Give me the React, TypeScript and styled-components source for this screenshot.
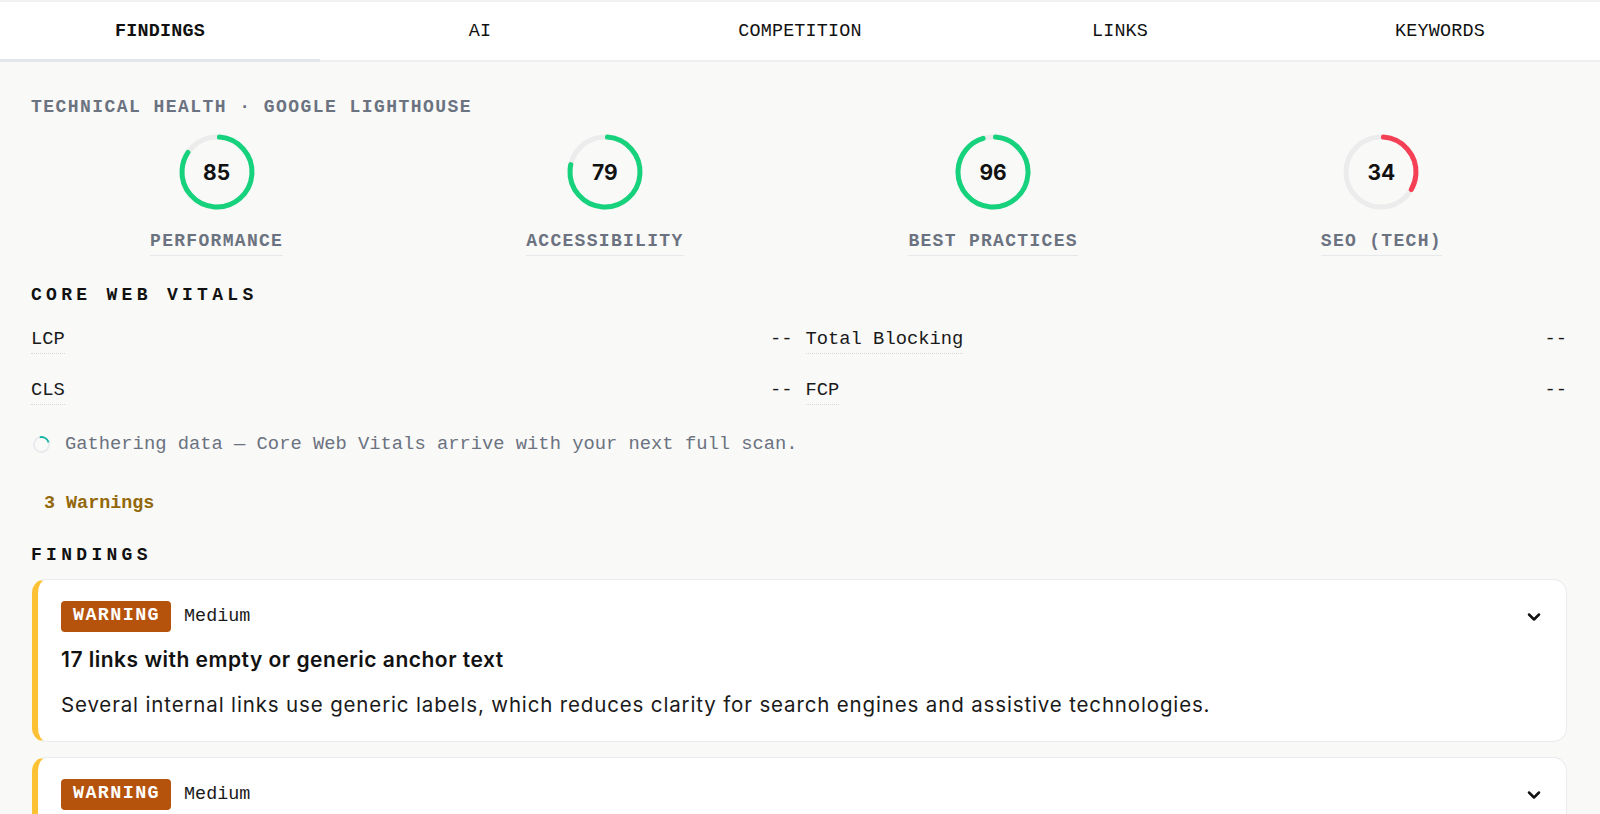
import styled, { createGlobalStyle } from "styled-components"
import { ChevronDown } from "lucide-react"

const mono = `"Liberation Mono", "DejaVu Sans Mono", monospace`
const sans = `Inter, "Noto Sans", sans-serif`

const GlobalStyle = createGlobalStyle`
  * { box-sizing: border-box; }
  body {
    margin: 0;
    background: #f9f9f8;
    font-family: ${mono};
    color: #111;
  }
`

const tabs = ["FINDINGS", "AI", "COMPETITION", "LINKS", "KEYWORDS"]

const scores = [
  { value: 85, label: "PERFORMANCE", color: "#17d27c" },
  { value: 79, label: "ACCESSIBILITY", color: "#17d27c" },
  { value: 96, label: "BEST PRACTICES", color: "#17d27c" },
  { value: 34, label: "SEO (TECH)", color: "#f43f55" },
]

const vitals = [
  { label: "LCP", value: "--" },
  { label: "Total Blocking", value: "--" },
  { label: "CLS", value: "--" },
  { label: "FCP", value: "--" },
]

const findings = [
  {
    title: "17 links with empty or generic anchor text",
    text: "Several internal links use generic labels, which reduces clarity for search engines and assistive technologies.",
  },
  {
    title: "Missing alt text on images",
    text: "Some images have no alt attribute.",
  },
]

const Gauge = ({ value, color }: { value: number; color: string }) => {
  const r = 35
  const c = 2 * Math.PI * r
  return (
    <GaugeWrap>
      <svg width="78" height="78" viewBox="0 0 78 78">
        <circle cx="39" cy="39" r={r} fill="none" stroke="#ececec" strokeWidth="5" />
        <circle
          cx="39"
          cy="39"
          r={r}
          fill="none"
          stroke={color}
          strokeWidth="5"
          strokeLinecap="round"
          strokeDasharray={`${(c * value) / 100 - 4} ${c}`}
          transform="rotate(-86 39 39)"
        />
      </svg>
      <GaugeValue>{value}</GaugeValue>
    </GaugeWrap>
  )
}

export default function App() {
  return (
    <>
      <GlobalStyle />
      <TabBar>
        {tabs.map((t, i) => (
          <Tab key={t} $active={i === 0}>
            {t}
          </Tab>
        ))}
      </TabBar>
      <Page>
        <SectionLabel>TECHNICAL HEALTH · GOOGLE LIGHTHOUSE</SectionLabel>
        <ScoreGrid>
          {scores.map((s) => (
            <ScoreItem key={s.label}>
              <Gauge value={s.value} color={s.color} />
              <ScoreLabel>{s.label}</ScoreLabel>
            </ScoreItem>
          ))}
        </ScoreGrid>
        <Heading>CORE WEB VITALS</Heading>
        <VitalsGrid>
          {vitals.map((v) => (
            <VitalRow key={v.label}>
              <VitalLabel>{v.label}</VitalLabel>
              <span>{v.value}</span>
            </VitalRow>
          ))}
        </VitalsGrid>
        <Gathering>
          <Spinner />
          Gathering data — Core Web Vitals arrive with your next full scan.
        </Gathering>
        <WarningCount>3 Warnings</WarningCount>
        <Heading $top={29}>FINDINGS</Heading>
        <CardList>
          {findings.map((f) => (
            <Card key={f.title}>
              <CardHead>
                <Badge>WARNING</Badge>
                <Severity>Medium</Severity>
                <Chevron>
                  <ChevronDown size={20} strokeWidth={3} />
                </Chevron>
              </CardHead>
              <CardTitle>{f.title}</CardTitle>
              <CardText>{f.text}</CardText>
            </Card>
          ))}
        </CardList>
      </Page>
    </>
  )
}

const TabBar = styled.nav`
  display: grid;
  grid-template-columns: repeat(5, 1fr);
  background: #fff;
  border-top: 2px solid #f1f3f3;
  border-bottom: 2px solid #eef0f0;
  height: 62px;
`

const Tab = styled.div<{ $active?: boolean }>`
  display: flex;
  align-items: center;
  justify-content: center;
  font-size: 18.4px;
  letter-spacing: 0.2px;
  font-weight: ${(p) => (p.$active ? 700 : 400)};
  color: #111;
  border-bottom: 3px solid ${(p) => (p.$active ? "#e4e7ea" : "transparent")};
  margin-bottom: -2px;
  padding-top: 1px;
`

const Page = styled.main`
  padding: 34px 33px 0 31px;
`

const SectionLabel = styled.div`
  font-size: 18px;
  letter-spacing: 1.45px;
  font-weight: 700;
  color: #6b7280;
  line-height: 22px;
`

const ScoreGrid = styled.div`
  display: grid;
  grid-template-columns: repeat(4, 1fr);
  gap: 17px;
  margin-top: 15px;
`

const ScoreItem = styled.div`
  display: flex;
  flex-direction: column;
  align-items: center;
`

const GaugeWrap = styled.div`
  position: relative;
  width: 78px;
  height: 78px;
  svg {
    display: block;
  }
`

const GaugeValue = styled.span`
  position: absolute;
  inset: 0;
  display: flex;
  align-items: center;
  justify-content: center;
  font-family: ${sans};
  font-weight: 700;
  font-size: 21px;
  color: #111;
`

const ScoreLabel = styled.div`
  margin-top: 19px;
  font-size: 18px;
  letter-spacing: 1.3px;
  font-weight: 700;
  color: #6b7280;
  line-height: 22px;
  padding-bottom: 3px;
  border-bottom: 1px solid #e6e8eb;
`

const Heading = styled.h2<{ $top?: number }>`
  margin: ${(p) => p.$top ?? 28}px 0 0;
  font-size: 18px;
  font-weight: 700;
  letter-spacing: 4.3px;
  line-height: 22px;
  color: #111;
`

const VitalsGrid = styled.div`
  display: grid;
  grid-template-columns: 1fr 1fr;
  column-gap: 13px;
  row-gap: 23px;
  margin-top: 22px;
`

const VitalRow = styled.div`
  display: flex;
  justify-content: space-between;
  align-items: flex-start;
  font-size: 18.8px;
  line-height: 22px;
  color: #1a1a1a;
  height: 28px;
`

const VitalLabel = styled.span`
  border-bottom: 1px dotted #d4d7db;
  padding-bottom: 3px;
`

const Gathering = styled.div`
  display: flex;
  align-items: center;
  gap: 15px;
  margin-top: 26px;
  font-size: 18.8px;
  line-height: 22px;
  color: #6b7280;
  padding-left: 2px;
`

const Spinner = styled.span`
  width: 17px;
  height: 17px;
  border-radius: 50%;
  border: 2.5px solid #e8eaed;
  border-top-color: #19b3a6;
  transform: rotate(30deg);
`

const WarningCount = styled.div`
  margin: 38px 0 0 13px;
  font-size: 18.4px;
  font-weight: 700;
  line-height: 22px;
  color: #93680b;
`

const CardList = styled.div`
  display: flex;
  flex-direction: column;
  gap: 15px;
  margin-top: 13px;
  padding-left: 1px;
`

const Card = styled.section`
  background: #fff;
  border: 1px solid #e9ecee;
  border-left: 6px solid #fdc234;
  border-radius: 14px;
  padding: 21px 22px 23px 23px;
`

const CardHead = styled.div`
  display: flex;
  align-items: center;
  gap: 13px;
`

const Badge = styled.span`
  background: #b5530c;
  color: #fff;
  font-size: 18.4px;
  font-weight: 700;
  letter-spacing: 1.4px;
  line-height: 30px;
  height: 31px;
  padding: 0 11px 0 12px;
  border-radius: 4px;
`

const Severity = styled.span`
  font-size: 18.4px;
  color: #1a1a1a;
`

const Chevron = styled.span`
  margin-left: auto;
  display: flex;
  color: #111;
`

const CardTitle = styled.h3`
  margin: 15px 0 0;
  font-family: ${sans};
  font-size: 21px;
  font-weight: 600;
  letter-spacing: 0.5px;
  line-height: 26px;
  color: #111;
`

const CardText = styled.p`
  margin: 19px 0 0;
  font-family: ${sans};
  font-size: 20.5px;
  letter-spacing: 0.85px;
  line-height: 26px;
  color: #1a1a1a;
`
